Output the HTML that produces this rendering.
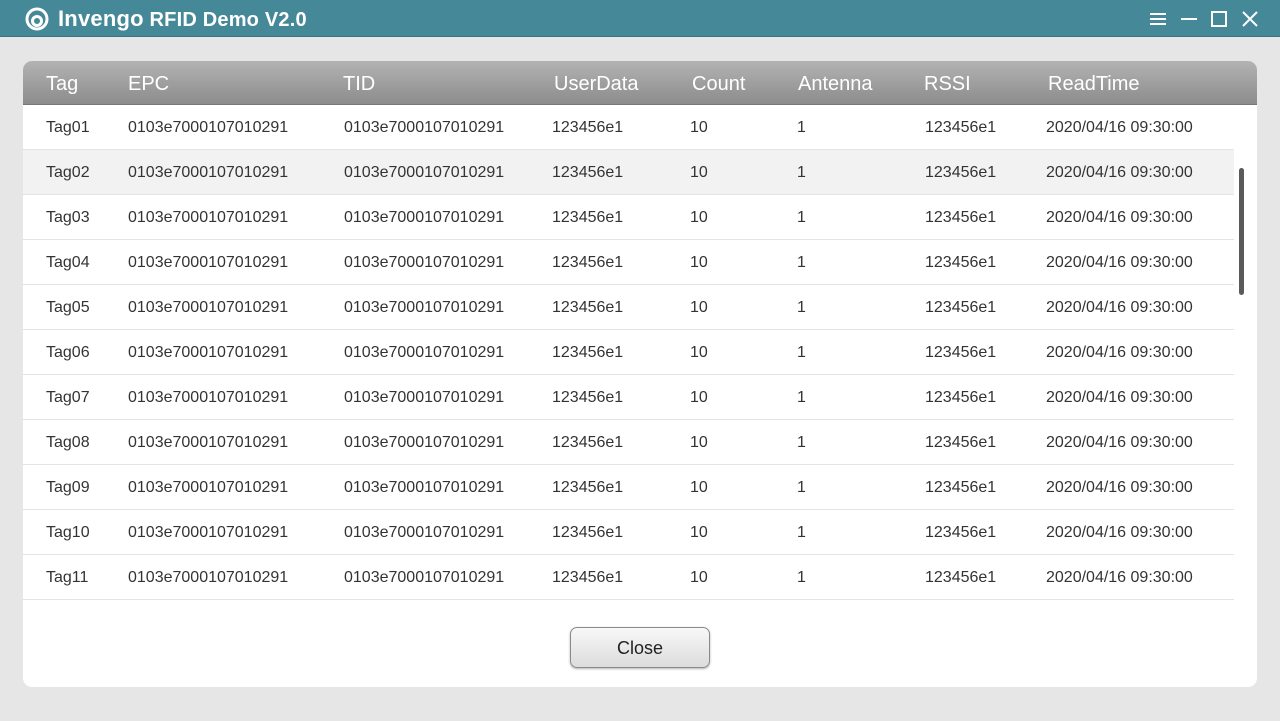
<!DOCTYPE html>
<html><head><meta charset="utf-8"><style>
*{margin:0;padding:0;box-sizing:border-box}
body{width:1280px;height:721px;background:#e6e6e6;font-family:"Liberation Sans",sans-serif;position:relative;overflow:hidden}
.tb{position:absolute;left:0;top:0;width:1280px;height:37px;background:#458898;border-bottom:1px solid #3a7482}
.title{position:absolute;left:58px;top:6px;color:#fff;font-size:20px;font-weight:bold;letter-spacing:0.2px}
.title b{font-size:22px}
.panel{position:absolute;left:23px;top:61px;width:1234px;height:626px;background:#fff;border-radius:9px;overflow:hidden}
.hd{position:absolute;left:0;top:0;width:1234px;height:44px;background:linear-gradient(#b3b3b3,#8c8c8c);border-bottom:1px solid #777}
.hd span{position:absolute;top:12px;color:#fff;font-size:20px}
.row{position:absolute;left:0;width:1211px;height:45px;border-bottom:1px solid #e4e4e4}
.row span{position:absolute;top:14px;color:#333;font-size:16px}
.sb{position:absolute;left:1216px;top:107px;width:5px;height:127px;background:#5a5a5a;border-radius:3px}
.btn{position:absolute;left:547px;top:566px;width:140px;height:41px;border:1px solid #8a8a8a;border-radius:7px;background:linear-gradient(#f8f8f8,#dcdcdc);font-size:18px;color:#222;text-align:center;line-height:41px;box-shadow:0 1px 2px rgba(0,0,0,.3)}
</style></head><body>
<div class="tb">
<svg style="position:absolute;left:22px;top:7px" width="30" height="24" viewBox="0 0 30 24"><circle cx="15" cy="12" r="10" fill="none" stroke="#fff" stroke-width="3"/><circle cx="15" cy="14" r="4.5" fill="none" stroke="#fff" stroke-width="3"/></svg>
<div class="title"><b>Invengo</b> RFID Demo V2.0</div>
<svg style="position:absolute;left:1148px;top:10px" width="110" height="18" viewBox="0 0 110 18">
<g stroke="#fff" stroke-width="2" fill="none"><path d="M2 4h16M2 9h16M2 14h16"/><path d="M33 9h16"/><rect x="64" y="2" width="14" height="14"/><path d="M95 2l14 14M109 2l-14 14"/></g></svg>
</div>
<div class="panel">
<div class="hd"><span style="left:23px">Tag</span><span style="left:105px">EPC</span><span style="left:320px">TID</span><span style="left:531px">UserData</span><span style="left:669px">Count</span><span style="left:775px">Antenna</span><span style="left:901px">RSSI</span><span style="left:1025px">ReadTime</span></div>
<div class="sb"></div>
<div class="btn">Close</div>
</div>
<div id="r" style="position:absolute;left:23px;top:61px">
<div class="row" style="top:44px"><span style="left:23px">Tag01</span><span style="left:105px">0103e7000107010291</span><span style="left:321px">0103e7000107010291</span><span style="left:529px">123456e1</span><span style="left:667px">10</span><span style="left:774px">1</span><span style="left:902px">123456e1</span><span style="left:1023px">2020/04/16 09:30:00</span></div>
<div class="row" style="top:89px;background:#f2f2f2"><span style="left:23px">Tag02</span><span style="left:105px">0103e7000107010291</span><span style="left:321px">0103e7000107010291</span><span style="left:529px">123456e1</span><span style="left:667px">10</span><span style="left:774px">1</span><span style="left:902px">123456e1</span><span style="left:1023px">2020/04/16 09:30:00</span></div>
<div class="row" style="top:134px"><span style="left:23px">Tag03</span><span style="left:105px">0103e7000107010291</span><span style="left:321px">0103e7000107010291</span><span style="left:529px">123456e1</span><span style="left:667px">10</span><span style="left:774px">1</span><span style="left:902px">123456e1</span><span style="left:1023px">2020/04/16 09:30:00</span></div>
<div class="row" style="top:179px"><span style="left:23px">Tag04</span><span style="left:105px">0103e7000107010291</span><span style="left:321px">0103e7000107010291</span><span style="left:529px">123456e1</span><span style="left:667px">10</span><span style="left:774px">1</span><span style="left:902px">123456e1</span><span style="left:1023px">2020/04/16 09:30:00</span></div>
<div class="row" style="top:224px"><span style="left:23px">Tag05</span><span style="left:105px">0103e7000107010291</span><span style="left:321px">0103e7000107010291</span><span style="left:529px">123456e1</span><span style="left:667px">10</span><span style="left:774px">1</span><span style="left:902px">123456e1</span><span style="left:1023px">2020/04/16 09:30:00</span></div>
<div class="row" style="top:269px"><span style="left:23px">Tag06</span><span style="left:105px">0103e7000107010291</span><span style="left:321px">0103e7000107010291</span><span style="left:529px">123456e1</span><span style="left:667px">10</span><span style="left:774px">1</span><span style="left:902px">123456e1</span><span style="left:1023px">2020/04/16 09:30:00</span></div>
<div class="row" style="top:314px"><span style="left:23px">Tag07</span><span style="left:105px">0103e7000107010291</span><span style="left:321px">0103e7000107010291</span><span style="left:529px">123456e1</span><span style="left:667px">10</span><span style="left:774px">1</span><span style="left:902px">123456e1</span><span style="left:1023px">2020/04/16 09:30:00</span></div>
<div class="row" style="top:359px"><span style="left:23px">Tag08</span><span style="left:105px">0103e7000107010291</span><span style="left:321px">0103e7000107010291</span><span style="left:529px">123456e1</span><span style="left:667px">10</span><span style="left:774px">1</span><span style="left:902px">123456e1</span><span style="left:1023px">2020/04/16 09:30:00</span></div>
<div class="row" style="top:404px"><span style="left:23px">Tag09</span><span style="left:105px">0103e7000107010291</span><span style="left:321px">0103e7000107010291</span><span style="left:529px">123456e1</span><span style="left:667px">10</span><span style="left:774px">1</span><span style="left:902px">123456e1</span><span style="left:1023px">2020/04/16 09:30:00</span></div>
<div class="row" style="top:449px"><span style="left:23px">Tag10</span><span style="left:105px">0103e7000107010291</span><span style="left:321px">0103e7000107010291</span><span style="left:529px">123456e1</span><span style="left:667px">10</span><span style="left:774px">1</span><span style="left:902px">123456e1</span><span style="left:1023px">2020/04/16 09:30:00</span></div>
<div class="row" style="top:494px"><span style="left:23px">Tag11</span><span style="left:105px">0103e7000107010291</span><span style="left:321px">0103e7000107010291</span><span style="left:529px">123456e1</span><span style="left:667px">10</span><span style="left:774px">1</span><span style="left:902px">123456e1</span><span style="left:1023px">2020/04/16 09:30:00</span></div>
</div>
</body></html>
